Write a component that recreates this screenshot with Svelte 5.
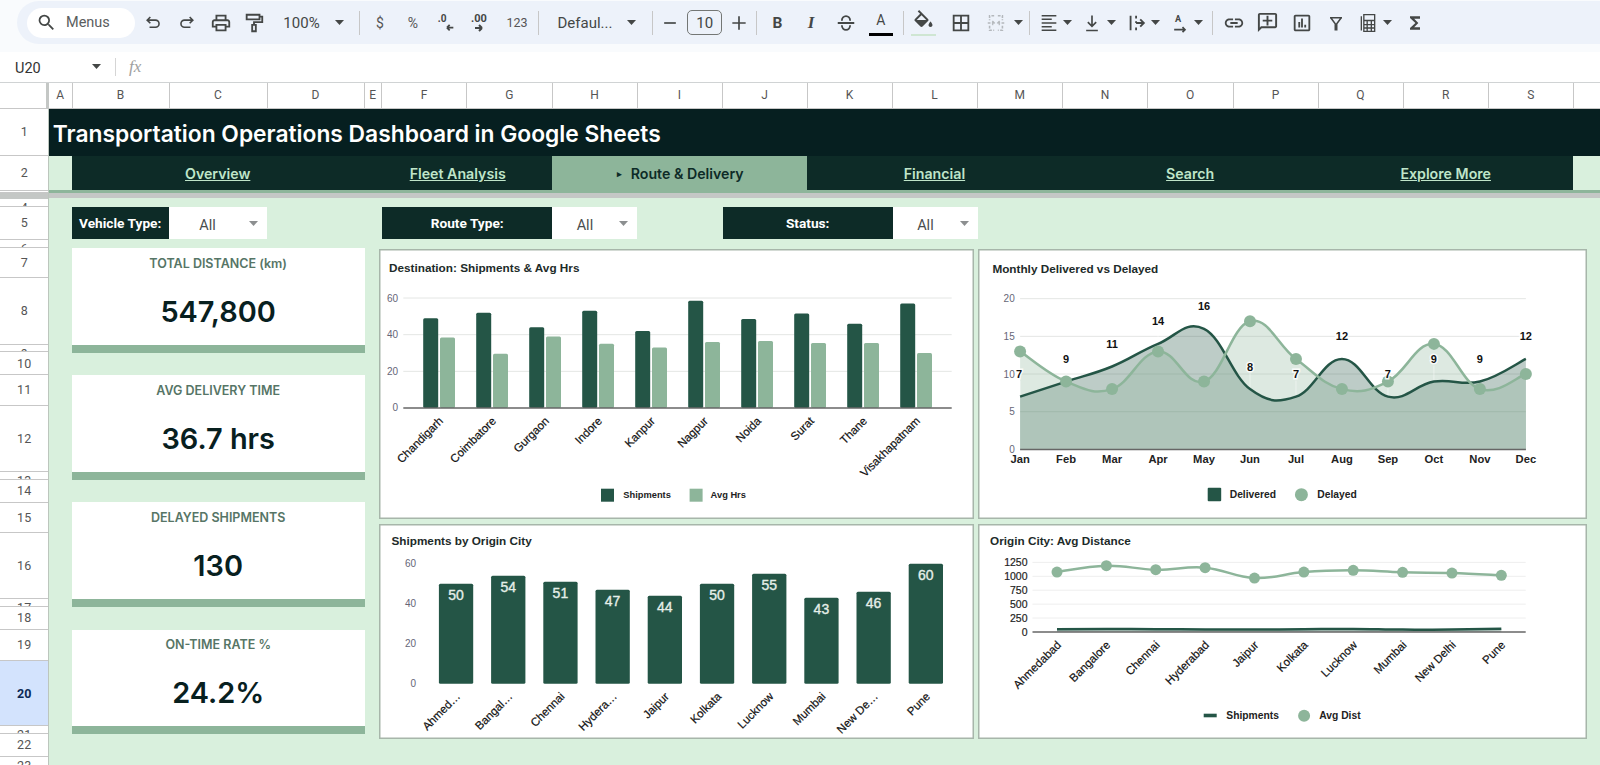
<script>
  const F = 'M16.56 8.94L7.62 0 6.21 1.41l2.38 2.38-5.15 5.15c-.59.59-.59 1.54 0 2.12l5.5 5.5c.29.29.68.44 1.06.44s.77-.15 1.06-.44l5.5-5.5c.59-.58.59-1.53 0-2.12zM5.21 10L10 5.21 14.79 10H5.21zM19 11.5s-2 2.17-2 3.5c0 1.1.9 2 2 2s2-.9 2-2c0-1.33-2-3.5-2-3.5z';
  const rawTools = [
    { c: 153, w: 19, s: 'M8 5 4 9l4 4M4 9h10.5a4.5 4.5 0 0 1 0 9H7' },
    { c: 186, w: 19, s: 'M16 5l4 4-4 4M20 9H9.5a4.5 4.5 0 0 0 0 9H17' },
    { c: 221, w: 22, p: 'M19 8h-1V3H6v5H5c-1.66 0-3 1.34-3 3v6h4v4h12v-4h4v-6c0-1.66-1.34-3-3-3zM8 5h8v3H8V5zm8 12v2H8v-4h8v2zm2-2v-2H6v2H4v-4c0-.55.45-1 1-1h14c.55 0 1 .45 1 1v4h-2z' },
    { c: 254, w: 22, s: 'M4 3h14v5H4zM18 5h3v6h-9v3M10 14h4v7h-4z' },
    { c: 301.5, w: 42, text: '100%', cls: 'big' },
    { c: 339, caret: true },
    { c: 359, sep: true },
    { c: 380, w: 16, text: '$', cls: 'sm' },
    { c: 413, w: 18, text: '%', cls: 'sm' },
    { c: 446, w: 22, s: 'M13 17h7M13 17l3-3M13 17l3 3', t: '.0', tx: 3 },
    { c: 482, w: 24, s: 'M5 17h7M12 17l-3-3M12 17l-3 3', t: '.00', tx: 1 },
    { c: 517, w: 24, text: '123', cls: 'xs' },
    { c: 538.6, sep: true },
    { c: 585, w: 60, text: 'Defaul...', cls: 'big' },
    { c: 632, caret: true },
    { c: 652.5, sep: true },
    { c: 670, w: 20, s: 'M5 12h14' },
    { c: 704.7, w: 35.5, text: '10', cls: 'box' },
    { c: 738.6, w: 20, s: 'M12 4v16M4 12h16' },
    { c: 756.8, sep: true },
    { c: 777.5, w: 18, text: 'B', cls: 'bold' },
    { c: 811, w: 18, text: 'I', cls: 'ital' },
    { c: 845.7, w: 22, s: 'M3 12h18M7.5 9.5a4.5 5 0 0 1 9 0M7.5 14.5a4.5 5 0 0 0 9 0' },
    { c: 881, w: 24, text: 'A', cls: 'color' },
    { c: 903.6, sep: true },
    { c: 924, w: 25, p: F, cls: 'fill' },
    { c: 960.7, w: 22, p: 'M3 3v18h18V3H3zm8 16H5v-6h6v6zm0-8H5V5h6v6zm8 8h-6v-6h6v6zm0-8h-6V5h6v6z' },
    { c: 996, w: 22, s: 'M10 4H5v5M5 15v5h5M14 4h5v5M19 15v5h-5M3 12h7M8 10l2 2-2 2M21 12h-7M16 10l-2 2 2 2', cls: 'off' },
    { c: 1018.6, caret: true, cls: 'off' },
    { c: 1030, sep: true },
    { c: 1049, w: 22, s: 'M4 4h16M4 8h11M4 12h16M4 16h11M4 20h16', cls: 'thin' },
    { c: 1068, caret: true },
    { c: 1092.6, w: 20, s: 'M12 3v13M7 11l5 5 5-5M5 21h14' },
    { c: 1112, caret: true },
    { c: 1137, w: 22, s: 'M5 4v16M11 4v3M11 10v2M11 17v3M11 12h8M15.5 8l4 4-4 4' },
    { c: 1156, caret: true },
    { c: 1180.6, w: 20, s: 'M5 20h13M15 17l3 3-3 3', t: 'A', tx: 6 },
    { c: 1199, caret: true },
    { c: 1213, sep: true },
    { c: 1234, w: 22, p: 'M3.9 12c0-1.71 1.39-3.1 3.1-3.1h4V7H7c-2.76 0-5 2.24-5 5s2.24 5 5 5h4v-1.9H7c-1.71 0-3.1-1.39-3.1-3.1zM8 13h8v-2H8v2zm9-6h-4v1.9h4c1.71 0 3.1 1.39 3.1 3.1s-1.39 3.1-3.1 3.1h-4V17h4c2.76 0 5-2.24 5-5s-2.24-5-5-5z' },
    { c: 1267.5, w: 23, p: 'M22 4c0-1.1-.9-2-2-2H4c-1.1 0-2 .9-2 2v12c0 1.1.9 2 2 2h14l4 4V4zm-2 13.17L18.83 16H4V4h16v13.17zM13 5h-2v4H7v2h4v4h2v-4h4V9h-4z', cls: 'flip' },
    { c: 1302, w: 22, p: 'M19 3H5c-1.1 0-2 .9-2 2v14c0 1.1.9 2 2 2h14c1.1 0 2-.9 2-2V5c0-1.1-.9-2-2-2zm0 16H5V5h14v14zM8 11h2v6H8zM11 7h2v10h-2zM14.5 14h2v3h-2z' },
    { c: 1336, w: 18, s: 'M4 5h16M5 5l6 8v8h2v-8l6-8' },
    { c: 1368, w: 20, s: 'M4 4v17M7 2h13v20H7zM7 9h13M7 14h13M7 18h13M11 9v13M16 9v13', cls: 'thin' },
    { c: 1388, caret: true },
    { c: 1415, w: 20, p: 'M18 4H6v2l6.5 6L6 18v2h12v-3h-7l5-5-5-5h7z' }
  ];
  let end = 135;
  const tools = rawTools.map((t) => {
    const w = t.sep ? 1 : t.caret ? 9 : t.w;
    const ml = t.c - w / 2 - end;
    end = t.c + w / 2;
    return { ...t, width: w, ml };
  });

  const cols = [['A', 23.5], ['B', 97], ['C', 98], ['D', 97], ['E', 17.5], ['F', 85], ['G', 85.5], ['H', 85], ['I', 85], ['J', 85], ['K', 85], ['L', 85], ['M', 85.5], ['N', 85], ['O', 85.5], ['P', 85], ['Q', 85], ['R', 85.5], ['S', 84.5], ['T', 85]];
  const rows = [
    [1, 47.5], [2, 34.5], ['', 2.5], ['', 5.5, 'frz'], [4, 8.5, 'clip'], [5, 32.5], [6, 8.5, 'clip'], [7, 30], [8, 66.7],
    [9, 7.7, 'clip'], [10, 22.6], [11, 31], [12, 66.5], [13, 7.5, 'clip'], [14, 23], [15, 30.5], [16, 66], [17, 7.5, 'clip'],
    [18, 22.7], [19, 31.4], [20, 65.3, 'sel'], [21, 7.5, 'clip'], [22, 23.2], [23, 30, 'clip']
  ];
  const tabs = [['Overview', 292], ['Fleet Analysis', 188], ['Route & Delivery', 255, true], ['Financial', 255.5], ['Search', 256], ['Explore More', 255]];
  const kpis = [['TOTAL DISTANCE (km)', '547,800'], ['AVG DELIVERY TIME', '36.7 hrs'], ['DELAYED SHIPMENTS', '130'], ['ON-TIME RATE %', '24.2%']];

  function smooth(pts, k = 0.2) {
    let d = `M${pts[0][0]} ${pts[0][1]}`;
    for (let i = 0; i < pts.length - 1; i++) {
      const p0 = pts[Math.max(i - 1, 0)], p1 = pts[i], p2 = pts[i + 1], p3 = pts[Math.min(i + 2, pts.length - 1)];
      const c1 = [p1[0] + (p2[0] - p0[0]) * k, p1[1] + (p2[1] - p0[1]) * k];
      const c2 = [p2[0] - (p3[0] - p1[0]) * k, p2[1] - (p3[1] - p1[1]) * k];
      d += `C${c1[0]} ${c1[1]} ${c2[0]} ${c2[1]} ${p2[0]} ${p2[1]}`;
    }
    return d;
  }

  /* chart 1 */
  const c1y = (v) => 408.3 - v * 1.833;
  const dest = [['Chandigarh', 49, 38.4], ['Coimbatore', 52, 29.6], ['Gurgaon', 44, 39], ['Indore', 53, 35], ['Kanpur', 42, 33], ['Nagpur', 58.5, 36], ['Noida', 48.5, 36.6], ['Surat', 51.5, 35.5], ['Thane', 46, 35.5], ['Visakhapatnam', 57, 30]];

  /* chart 2 */
  const c2x = (i) => 1020.4 + i * 45.98;
  const c2y = (v) => 449.7 - v * 7.537;
  const months = ['Jan', 'Feb', 'Mar', 'Apr', 'May', 'Jun', 'Jul', 'Aug', 'Sep', 'Oct', 'Nov', 'Dec'];
  const delivered = [7, 9, 11, 14, 16, 8, 7, 12, 7, 9, 9, 12];
  const delayed = [13, 9, 8, 13, 9, 17, 12, 8, 9, 14, 8, 10];
  const delPts = delivered.map((v, i) => [c2x(i), c2y(v)]);
  const dlyPts = delayed.map((v, i) => [c2x(i), c2y(v)]);
  const delLine = smooth(delPts);
  const dlyLine = smooth(dlyPts);
  const closeA = `L1526.3 449.7L1020.4 449.7Z`;

  /* chart 3 */
  const origin = [['Ahmed…', 50], ['Bangal…', 54], ['Chennai', 51], ['Hydera…', 47], ['Jaipur', 44], ['Kolkata', 50], ['Lucknow', 55], ['Mumbai', 43], ['New De…', 46], ['Pune', 60]];

  /* chart 4 */
  const c4x = (i) => 1057.3 + i * 49.37;
  const c4y = (v) => 632.3 - v * 0.0557;
  const names = ['Ahmedabad', 'Bangalore', 'Chennai', 'Hyderabad', 'Jaipur', 'Kolkata', 'Lucknow', 'Mumbai', 'New Delhi', 'Pune'];
  const avgPts = [187, 168, 180, 174, 205, 187, 182, 188, 190, 197].map((t, i) => [c4x(i), 510 + t / 3]);
  const shipPts = origin.map((o, i) => [c4x(i), c4y(o[1])]);
  const shipLine = smooth(shipPts);
</script>

<div class="page">
  <div class="toolbar">
    <div class="pill">
      <div class="menus">
        <svg class="ico" viewBox="0 0 24 24"><path class="fp" d="M15.5 14h-.79l-.28-.27A6.471 6.471 0 0 0 16 9.5 6.5 6.5 0 1 0 9.5 16c1.61 0 3.09-.59 4.23-1.57l.27.28v.79l5 4.99L20.49 19l-4.99-5zm-6 0C7.01 14 5 11.99 5 9.5S7.01 5 9.5 5 14 7.01 14 9.5 11.99 14 9.5 14z" /></svg>
        <span>Menus</span>
      </div>
      {#each tools as t}
        {#if t.sep}
          <span class="sep" style="margin-left:{t.ml}px"></span>
        {:else if t.caret}
          <svg class="caret {t.cls || ''}" style="margin-left:{t.ml}px" viewBox="0 0 9 5"><polygon points="0,0 9,0 4.5,5" /></svg>
        {:else if t.text}
          <span class="tool {t.cls}" style="margin-left:{t.ml}px;width:{t.width}px">{t.text}</span>
        {:else}
          <svg class="tool {t.cls || ''}" style="margin-left:{t.ml}px;width:{t.width}px;height:{t.width}px" viewBox="0 0 24 24">
            {#if t.p}<path class="fp" d={t.p} />{/if}
            {#if t.s}<path class="sp" d={t.s} />{/if}
            {#if t.t}<text class="ict" x={t.tx} y="11">{t.t}</text>{/if}
          </svg>
        {/if}
      {/each}
    </div>
  </div>

  <div class="fbar">
    <span class="name">U20</span>
    <svg class="caret namecaret" viewBox="0 0 9 5"><polygon points="0,0 9,0 4.5,5" /></svg>
    <span class="fsep"></span>
    <span class="fx">fx</span>
  </div>

  <div class="colhead">
    <div class="corner"></div>
    {#each cols as c}
      <div class="col" style="width:{c[1]}px">{c[0]}</div>
    {/each}
  </div>

  <div class="body">
    <div class="rowhead">
      {#each rows as r}
        <div class="rh {r[2] || ''}" style="height:{r[1]}px">{r[0]}</div>
      {/each}
    </div>

    <div class="canvas">
      <div class="title">Transportation Operations Dashboard in Google Sheets</div>
      <nav class="nav">
        {#each tabs as t}
          <div class="tab" class:active={t[2]} style="width:{t[1]}px">
            {#if t[2]}<span class="mark">▸</span><span>{t[0]}</span>{:else}<u>{t[0]}</u>{/if}
          </div>
        {/each}
      </nav>
      <div class="strip"></div>
      <div class="freeze"></div>

      <div class="content">
        <aside class="left">
          <div class="filter">
            <div class="flabel v">Vehicle Type:</div>
            <div class="fval v"><span>All</span><svg class="fcaret" viewBox="0 0 9 5"><polygon points="0,0 9,0 4.5,5" /></svg></div>
          </div>
          <div class="kpis">
            {#each kpis as k}
              <div class="kpi">
                <div class="klabel">{k[0]}</div>
                <div class="kval">{k[1]}</div>
                <div class="kbar"></div>
              </div>
            {/each}
          </div>
        </aside>

        <section class="right">
          <div class="filters">
            <div class="filter">
              <div class="flabel">Route Type:</div>
              <div class="fval"><span>All</span><svg class="fcaret" viewBox="0 0 9 5"><polygon points="0,0 9,0 4.5,5" /></svg></div>
            </div>
            <div class="filter">
              <div class="flabel">Status:</div>
              <div class="fval"><span>All</span><svg class="fcaret" viewBox="0 0 9 5"><polygon points="0,0 9,0 4.5,5" /></svg></div>
            </div>
          </div>

          <div class="charts">
            <div class="chart">
              <svg viewBox="379 249.3 595 270">
                <text class="ctitle" x="389" y="272.5">Destination: Shipments &amp; Avg Hrs</text>
                {#each [60, 40, 20, 0] as g}
                  <text class="ylab" x="398" y={c1y(g) + 3.5}>{g}</text>
                  {#if g}<line class="grid" x1="403.3" x2="951.7" y1={c1y(g)} y2={c1y(g)} />{/if}
                {/each}
                {#each dest as d, i}
                  <rect class="dark" x={423.2 + i * 53} y={c1y(d[1])} width="15" height={d[1] * 1.833} rx="1.5" />
                  <rect class="lite" x={440 + i * 53} y={c1y(d[2])} width="15" height={d[2] * 1.833} rx="1.5" />
                  <text class="xrot" x={443.8 + i * 53} y="422" transform="rotate(-45 {443.8 + i * 53} 422)">{d[0]}</text>
                {/each}
                <line class="axis" x1="403.3" x2="951.7" y1="408.3" y2="408.3" />
                <rect class="dark" x="601" y="489" width="13" height="13" />
                <text class="leg small" x="623.3" y="498.5">Shipments</text>
                <rect class="lite" x="689.6" y="489" width="13" height="13" />
                <text class="leg small" x="710.6" y="498.5">Avg Hrs</text>
              </svg>
            </div>

            <div class="chart">
              <svg viewBox="978.3 249.3 609 270">
                <text class="ctitle" x="992.7" y="273.5">Monthly Delivered vs Delayed</text>
                {#each [20, 15, 10, 5] as g}
                  <line class="grid" x1="1020.4" x2="1526.2" y1={c2y(g)} y2={c2y(g)} />
                {/each}
                {#each [20, 15, 10, 5, 0] as g}
                  <text class="ylab" x="1015" y={c2y(g) + 3.5}>{g}</text>
                {/each}
                <path class="adark" d={delLine + closeA} />
                <path class="alite" d={dlyLine + closeA} />
                {#each delPts as p}
                  <line class="lead" x1={p[0]} x2={p[0]} y1={p[1] - 16} y2={p[1]} />
                {/each}
                <path class="ldark" d={delLine} />
                <path class="llite" d={dlyLine} />
                {#each dlyPts as p}
                  <circle class="lite" cx={p[0]} cy={p[1]} r="6" />
                {/each}
                {#each delPts as p, i}
                  <text class="dlab" x={p[0] - (i === 0 ? 1 : 0)} y={p[1] - 18.5}>{delivered[i]}</text>
                {/each}
                <line class="axis" x1="1020.4" x2="1526.2" y1="449.7" y2="449.7" />
                {#each months as m, i}
                  <text class="xmon" x={c2x(i)} y="463.5">{m}</text>
                {/each}
                <rect class="dark" x="1208" y="488" width="13.5" height="13.5" rx="1" />
                <text class="leg" x="1230" y="498.7">Delivered</text>
                <circle class="lite" cx="1301.7" cy="495" r="6.5" />
                <text class="leg" x="1317.6" y="498.7">Delayed</text>
              </svg>
            </div>

            <div class="chart">
              <svg viewBox="379 524.3 595 215.3">
                <text class="ctitle" x="391.5" y="545">Shipments by Origin City</text>
                {#each [60, 40, 20, 0] as g}
                  <text class="ylab" x="416" y={683.6 - g * 2 + 3.5}>{g}</text>
                {/each}
                {#each origin as o, i}
                  <rect class="dark" x={438.9 + i * 52.2} y={684 - o[1] * 2} width="34.3" height={o[1] * 2} rx="1.5" />
                  <text class="blab" x={456 + i * 52.2} y={684 - o[1] * 2 + 16}>{o[1]}</text>
                  <text class="xrot" x={461 + i * 52.2} y="697.5" transform="rotate(-45 {461 + i * 52.2} 697.5)">{o[0]}</text>
                {/each}
              </svg>
            </div>

            <div class="chart">
              <svg viewBox="978.3 524.3 609 215.3">
                <text class="ctitle" x="990.4" y="545">Origin City: Avg Distance</text>
                {#each [1250, 1000, 750, 500, 250] as g}
                  <line class="grid soft" x1="1032.8" x2="1526" y1={c4y(g)} y2={c4y(g)} />
                {/each}
                {#each [1250, 1000, 750, 500, 250, 0] as g}
                  <text class="ylab strong" x="1027.8" y={c4y(g) + 3.7}>{g}</text>
                {/each}
                <path class="adark" d={shipLine + `L${c4x(9)} 632.3L${c4x(0)} 632.3Z`} />
                <line class="axis" x1="1032.8" x2="1526" y1="632.3" y2="632.3" />
                <path class="ldark" d={shipLine} />
                <path class="llite" d={smooth(avgPts)} />
                {#each avgPts as p}
                  <circle class="lite" cx={p[0]} cy={p[1]} r="5.5" />
                {/each}
                {#each names as n, i}
                  <text class="xrot" x={c4x(i) + 4.7} y="646" transform="rotate(-45 {c4x(i) + 4.7} 646)">{n}</text>
                {/each}
                <rect class="dark" x="1204" y="714" width="13" height="3.6" />
                <text class="leg" x="1226.6" y="719.5">Shipments</text>
                <circle class="lite" cx="1304.4" cy="716" r="6" />
                <text class="leg" x="1319.6" y="719.5">Avg Dist</text>
              </svg>
            </div>
          </div>
        </section>
      </div>
    </div>
  </div>
</div>

<style>
  :global(body) { margin: 0; overflow: hidden; background: #fff; }
  .page { width: 1600px; height: 765px; overflow: hidden; font-family: Roboto, "Liberation Sans", sans-serif; color: #444746; }

  .toolbar { height: 52px; box-sizing: border-box; padding: 1px 0 8px 17px; background: #f9fbfd; }
  .pill { height: 43px; display: flex; align-items: center; background: #edf2fa; border-radius: 22px 0 0 22px; }
  .menus { width: 108px; height: 30px; margin-left: 10px; box-sizing: border-box; padding-left: 9px; display: flex; align-items: center; gap: 9px; background: #fff; border-radius: 15px; font-size: 14.5px; color: #5a5d5e; flex: none; }
  .ico { width: 21px; height: 21px; flex: none; }
  .fp { fill: #444746; }
  .sp { fill: none; stroke: #444746; stroke-width: 2; }
  .thin .sp { stroke-width: 1.6; }
  .ict { font: 700 11px Roboto, sans-serif; fill: #444746; }
  .tool { flex: none; display: flex; align-items: center; justify-content: center; white-space: nowrap; }
  .big { font-size: 15px; color: #444746; }
  .sm { font-size: 14px; color: #555; }
  .xs { font-size: 12.5px; color: #555; }
  .box { height: 25px; box-sizing: border-box; border: 1px solid #747775; border-radius: 5px; font-size: 15px; }
  .bold { font-weight: 700; font-size: 15.5px; }
  .ital { font: italic 700 17px "Liberation Serif", serif; }
  .color { height: 26px; box-sizing: border-box; align-items: flex-start; font-size: 14px; border-bottom: 3.5px solid #000; line-height: 20px; }
  .fill { border-bottom: 2.5px solid #cfe6d3; height: 24px !important; }
  .flip { transform: scaleX(-1); }
  .off .sp { stroke: #b4b8bc; stroke-width: 1.7; stroke-dasharray: 3 1.5; }
  .off polygon { fill: #b4b8bc; }
  .caret { flex: none; width: 9px; height: 5px; }
  .caret polygon { fill: #444746; }
  .sep { flex: none; width: 1px; height: 24px; background: #c7c7c7; }

  .fbar { height: 30.5px; display: flex; align-items: center; background: #fff; border-bottom: 1px solid #d0d3d4; box-sizing: border-box; }
  .name { margin-left: 15px; width: 77px; padding-top: 3px; font-size: 14.5px; color: #333; }
  .fsep { width: 1px; height: 18px; margin-left: 14px; background: #d5d5d5; }
  .fx { margin-left: 13px; font: italic 17px "Liberation Serif", serif; color: #a0a0a0; }

  .colhead { height: 26px; display: flex; background: #fff; }
  .corner { flex: none; width: 46px; border-right: 3px solid #c4c7c5; border-bottom: 1px solid #c7c7c7; box-sizing: content-box; height: 25px; }
  .col { flex: none; box-sizing: border-box; border-right: 1px solid #c7c7c7; border-bottom: 1px solid #c7c7c7; display: flex; align-items: center; justify-content: center; font-size: 12px; color: #555; }

  .body { display: flex; height: 657px; overflow: hidden; }
  .rowhead { flex: none; width: 49.3px; overflow: hidden; background: #fff; box-sizing: border-box; border-right: 1px solid #bcc6bd; }
  .rh { box-sizing: border-box; border-bottom: 1px solid #c7c7c7; display: flex; align-items: center; justify-content: center; font-size: 12.5px; color: #555; overflow: hidden; }
  .rh.clip { align-items: flex-start; padding-top: 1px; }
  .rh.frz { background: #c4c7c5; border: 0; }
  .rh.sel { background: #d3e3fd; color: #0b2a55; font-weight: 700; }

  .canvas { flex: 1; min-width: 0; background: #d9f0dd; }
  .title { height: 47.5px; box-sizing: border-box; display: flex; align-items: center; padding: 3px 0 0 3.5px; background: #061f20; color: #fff; font: 600 22.8px Inter, sans-serif; }
  .nav { height: 34px; display: flex; padding-left: 22.4px; }
  .tab { flex: none; display: flex; align-items: center; justify-content: center; gap: 9px; box-sizing: border-box; background: #0d2b27; color: #bfe5c9; font: 600 14.2px Inter, sans-serif; }
  .tab.active { background: #8db59a; color: #0d2b27; height: 37px; padding: 0 0 3px 2px; }
  .mark { font-size: 9px; }
  .strip { height: 2.5px; background: #8db59a; }
  .freeze { height: 5.5px; background: #c4c7c5; position: relative; }

  .content { display: flex; padding: 9px 0 0 22.4px; }
  .left { flex: none; width: 293px; margin-right: 14.3px; }
  .filter { display: flex; height: 32px; }
  .flabel { width: 170px; display: flex; align-items: center; justify-content: center; background: #0d2b27; color: #fff; font: 700 13.7px Roboto, sans-serif; }
  .fval { width: 85px; display: flex; align-items: center; justify-content: flex-end; gap: 26px; padding-right: 9px; box-sizing: border-box; background: #fff; font-size: 14.5px; color: #4a4d4e; }
  .fval span { padding-top: 5px; }
  .flabel.v { width: 97px; }
  .fval.v { width: 98px; gap: 33px; }
  .fcaret { width: 9px; height: 5px; margin-top: 1px; }
  .fcaret polygon { fill: #8c8f90; }
  .kpis { display: flex; flex-direction: column; gap: 22.7px; margin-top: 9px; }
  .kpi { height: 104.5px; display: flex; flex-direction: column; background: #fff; }
  .klabel { height: 30px; display: flex; align-items: center; justify-content: center; font: 600 12.5px Inter, sans-serif; color: #567566; }
  .kval { flex: 1; display: flex; align-items: center; justify-content: center; font: 600 28.9px Inter, sans-serif; color: #08201f; }
  .kbar { height: 8px; background: #8db59a; }

  .filters { display: flex; gap: 85.5px; padding-left: 3.2px; }
  .charts { display: grid; grid-template-columns: 595px 609px; grid-template-rows: 270px 215.3px; column-gap: 4.3px; row-gap: 4.6px; margin-top: 10.3px; }
  .chart { background: #fff; box-shadow: inset 0 0 0 1.5px #a7b6aa; }
  .chart svg { display: block; width: 100%; height: 100%; }

  text { font-family: "Liberation Sans", Arial, sans-serif; }
  .ctitle { font-size: 11.75px; font-weight: 700; fill: #1d2b29; }
  .ylab { font-size: 10px; fill: #667; text-anchor: end; }
  .ylab.strong { fill: #222; font-size: 10.5px; stroke: #222; stroke-width: 0.2; }
  .grid { stroke: #e4e6e4; stroke-width: 1; }
  .grid.soft { stroke: #eeeeee; }
  .axis { stroke: #666; stroke-width: 1.5; }
  .dark { fill: #245546; }
  .lite { fill: #8db59a; }
  .xrot { font-size: 11.5px; fill: #111; text-anchor: end; stroke: #111; stroke-width: 0.2; }
  .leg { font-size: 10.3px; font-weight: 700; fill: #222; }
  .leg.small { font-size: 9.3px; }
  .adark { fill: #245546; fill-opacity: 0.3; }
  .alite { fill: #8db59a; fill-opacity: 0.3; }
  .ldark { fill: none; stroke: #245546; stroke-width: 2.5; }
  .llite { fill: none; stroke: #8db59a; stroke-width: 2.5; }
  .lead { stroke: #fff; stroke-opacity: .45; stroke-width: 1; }
  .dlab { font-size: 11px; font-weight: 700; fill: #111; text-anchor: middle; paint-order: stroke; stroke: #fff; stroke-width: 3; stroke-opacity: .85; }
  .xmon { font-size: 11.2px; font-weight: 700; fill: #222; text-anchor: middle; }
  .blab { font-size: 14px; fill: #e6efe9; text-anchor: middle; stroke: #e6efe9; stroke-width: 0.35; }
</style>
